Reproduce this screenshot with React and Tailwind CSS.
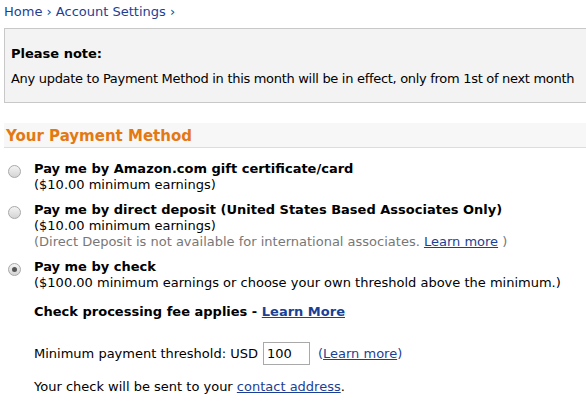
const Radio = ({ checked }) => (
    <span className="mt-[4px] flex h-[13px] w-[13px] shrink-0 items-center justify-center rounded-full border border-[#a8a8a8] bg-gradient-to-b from-[#f4f4f4] to-[#d4d4d4]">
        {checked && <span className="h-[5px] w-[5px] rounded-full bg-[#555]" />}
    </span>
);

const Option = ({ checked, title, children }) => (
    <div className="flex gap-[13px] pl-[8px]">
        <Radio checked={checked} />
        <div className="flex flex-col">
            <div className="font-bold leading-[16px]">{title}</div>
            {children}
        </div>
    </div>
);

export default function App() {
    return (
        <div className="h-[404px] w-[586px] overflow-hidden bg-white text-[13px] text-black [font-family:'DejaVu_Sans',Verdana,sans-serif]">
            <div className="px-[4px] pt-[4px] leading-[16px] text-[#1c3f94]">
                Home › Account Settings ›
            </div>
            <div className="ml-[4px] mt-[8px] w-[600px] border border-[#c8c8c8] bg-[#f3f3f3] px-[6px] pb-[15px] pt-[17px]">
                <div className="font-bold leading-[16px]">Please note:</div>
                <div className="mt-[9px] whitespace-nowrap leading-[16px] tracking-[-0.3px]">
                    Any update to Payment Method in this month will be in effect, only from 1st of next month
                </div>
            </div>
            <div className="ml-[4px] mt-[20px] border-b border-[#dddddd] bg-[#f7f7f7] px-[2px] pb-[2px] pt-[4px] text-[15px] font-bold leading-[18px] text-[#e47911]">
                Your Payment Method
            </div>
            <div className="mt-[13px] flex flex-col gap-[9px]">
                <Option title="Pay me by Amazon.com gift certificate/card">
                    <div className="leading-[16px]">($10.00 minimum earnings)</div>
                </Option>
                <Option title="Pay me by direct deposit (United States Based Associates Only)">
                    <div className="leading-[16px]">($10.00 minimum earnings)</div>
                    <div className="leading-[16px] text-[#777]">
                        (Direct Deposit is not available for international associates.{" "}
                        <a className="text-[#1c3f94] underline">Learn more</a> )
                    </div>
                </Option>
                <Option checked title="Pay me by check">
                    <div className="leading-[16px]">
                        ($100.00 minimum earnings or choose your own threshold above the minimum.)
                    </div>
                    <div className="mt-[13px] leading-[16px]">
                        <span className="font-bold">Check processing fee applies - </span>
                        <a className="font-bold text-[#1c3f94] underline">Learn More</a>
                    </div>
                    <div className="mt-[22px] flex items-center leading-[16px]">
                        <span>Minimum payment threshold: USD</span>
                        <span className="ml-[5px] flex h-[23px] w-[47px] items-center border border-[#a9a9a9] px-[3px]">100</span>
                        <span className="ml-[8px] text-[#1c3f94]">
                            (<a className="underline">Learn more</a>)
                        </span>
                    </div>
                    <div className="mt-[14px] leading-[16px]">
                        Your check will be sent to your{" "}
                        <a className="text-[#1c3f94] underline">contact address</a>.
                    </div>
                </Option>
            </div>
        </div>
    );
}
